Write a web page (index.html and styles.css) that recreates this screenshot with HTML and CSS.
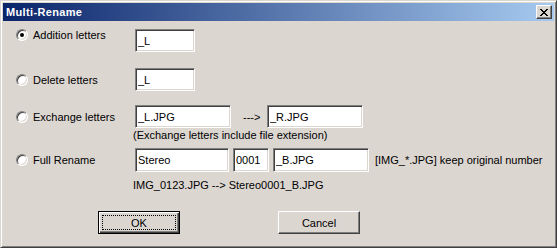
FILE: index.html
```html
<!DOCTYPE html>
<html>
<head>
    <link rel="stylesheet" href="styles.css">
</head>
<body>
    <div class="window">
        <div class="titlebar">
            <span class="title">Multi-Rename</span>
            <span class="close">
                <svg width="8" height="7" viewBox="0 0 8 7" shape-rendering="crispEdges"><path d="M0 0h2v1H0zM6 0h2v1H6zM1 1h2v1H1zM5 1h2v1H5zM2 2h4v1H2zM3 3h2v1H3zM2 4h4v1H2zM1 5h2v1H1zM5 5h2v1H5zM0 6h2v1H0zM6 6h2v1H6z" fill="#000"/></svg>
            </span>
        </div>
        <div class="body">
            <div class="row row-1">
                <label class="option option-top"><span class="radio checked"></span>Addition letters</label>
                <input class="field w60" type="text" value="_L" readonly>
            </div>
            <div class="row row-2">
                <label class="option"><span class="radio"></span>Delete letters</label>
                <input class="field w60" type="text" value="_L" readonly>
            </div>
            <div class="row row-3">
                <label class="option"><span class="radio"></span>Exchange letters</label>
                <input class="field w96" type="text" value="_L.JPG" readonly>
                <span class="arrow">---&gt;</span>
                <input class="field w96" type="text" value="_R.JPG" readonly>
            </div>
            <div class="note">(Exchange letters include file extension)</div>
            <div class="row row-4">
                <label class="option"><span class="radio"></span>Full Rename</label>
                <div class="fields">
                    <input class="field w94" type="text" value="Stereo" readonly>
                    <input class="field w36" type="text" value="0001" readonly>
                    <input class="field w96" type="text" value="_B.JPG" readonly>
                </div>
                <span class="hint">[IMG_*.JPG] keep original number</span>
            </div>
            <div class="note preview">IMG_0123.JPG --&gt; Stereo0001_B.JPG</div>
            <div class="buttons">
                <button class="btn default"><span class="focus">OK</span></button>
                <button class="btn">Cancel</button>
            </div>
        </div>
    </div>
</body>
</html>
```

FILE: styles.css
```css
body {
    margin: 0;
    background: #dcd6d1;
    font-family: "Liberation Sans", Arial, sans-serif;
    font-size: 11px;
    color: #000;
}

.window {
    width: 557px;
    height: 248px;
    box-sizing: border-box;
    background: #dcd6d1;
    border: 1px solid;
    border-color: #dcd6d1 #404040 #404040 #dcd6d1;
    box-shadow: inset 1px 1px 0 #fff, inset -1px -1px 0 #808080;
    padding: 2px;
}

.titlebar {
    height: 18px;
    display: flex;
    align-items: center;
    justify-content: space-between;
    background: linear-gradient(to right, #0a246a, #a6caf0);
    padding: 0 2px 0 3px;
}

.title {
    color: #fff;
    font-weight: bold;
    font-size: 11px;
    letter-spacing: 0.35px;
}

.close {
    width: 16px;
    height: 14px;
    box-sizing: border-box;
    background: #dcd6d1;
    border: 1px solid;
    border-color: #fff #404040 #404040 #fff;
    box-shadow: inset -1px -1px 0 #808080;
    display: flex;
    align-items: flex-start;
    justify-content: flex-start;
    padding: 3px 0 0 3px;
}

.close svg {
    display: block;
}

.body {
    padding: 8px 0 0 13px;
}

.row {
    display: flex;
    align-items: center;
    height: 23px;
}

.row-2 { margin-top: 16px; }
.row-3 { margin-top: 14px; }
.row-4 { margin-top: 6px; height: 24px; }

.option {
    width: 119px;
    flex: none;
    display: flex;
    align-items: center;
    gap: 5px;
    line-height: 12px;
}

.option-top {
    align-self: flex-start;
}

.radio {
    width: 12px;
    height: 12px;
    box-sizing: border-box;
    border-radius: 50%;
    border: 1px solid;
    border-color: #808080 #fff #fff #808080;
    box-shadow: inset 1px 1px 0 #404040, inset -1px -1px 0 #dcd6d1;
    background: #fff;
    display: flex;
    align-items: center;
    justify-content: center;
}

.radio.checked::after {
    content: "";
    width: 4px;
    height: 4px;
    border-radius: 50%;
    background: #000;
}

.field {
    height: 100%;
    box-sizing: border-box;
    margin: 0;
    padding: 0 2px;
    border: 1px solid;
    border-color: #808080 #fff #fff #808080;
    box-shadow: inset 1px 1px 0 #404040, inset -1px -1px 0 #dcd6d1;
    background: #fff;
    font: inherit;
    color: #000;
    outline: none;
}

.w60 { width: 60px; }
.w94 { width: 94px; }
.w96 { width: 96px; }
.w36 { width: 36px; }

.arrow {
    width: 36px;
    box-sizing: border-box;
    padding-left: 12px;
}

.fields {
    display: flex;
    gap: 4px;
    height: 100%;
}

.hint {
    margin-left: 6px;
}

.note {
    margin: 1px 0 0 117px;
    line-height: 13px;
}

.preview {
    margin-top: 7px;
}

.buttons {
    display: flex;
    gap: 98px;
    margin: 19px 0 0 82px;
}

.btn {
    width: 82px;
    height: 23px;
    box-sizing: border-box;
    margin: 0;
    padding: 0;
    background: #dcd6d1;
    border: 1px solid;
    border-color: #fff #404040 #404040 #fff;
    box-shadow: inset -1px -1px 0 #808080;
    font: inherit;
    color: #000;
}

.btn.default {
    border-color: #000;
    box-shadow: inset 1px 1px 0 #fff, inset -1px -1px 0 #404040, inset -2px -2px 0 #808080;
    padding: 3px;
}

.focus {
    display: flex;
    align-items: center;
    justify-content: center;
    height: 100%;
    border: 1px dotted #000;
    box-sizing: border-box;
}
```
